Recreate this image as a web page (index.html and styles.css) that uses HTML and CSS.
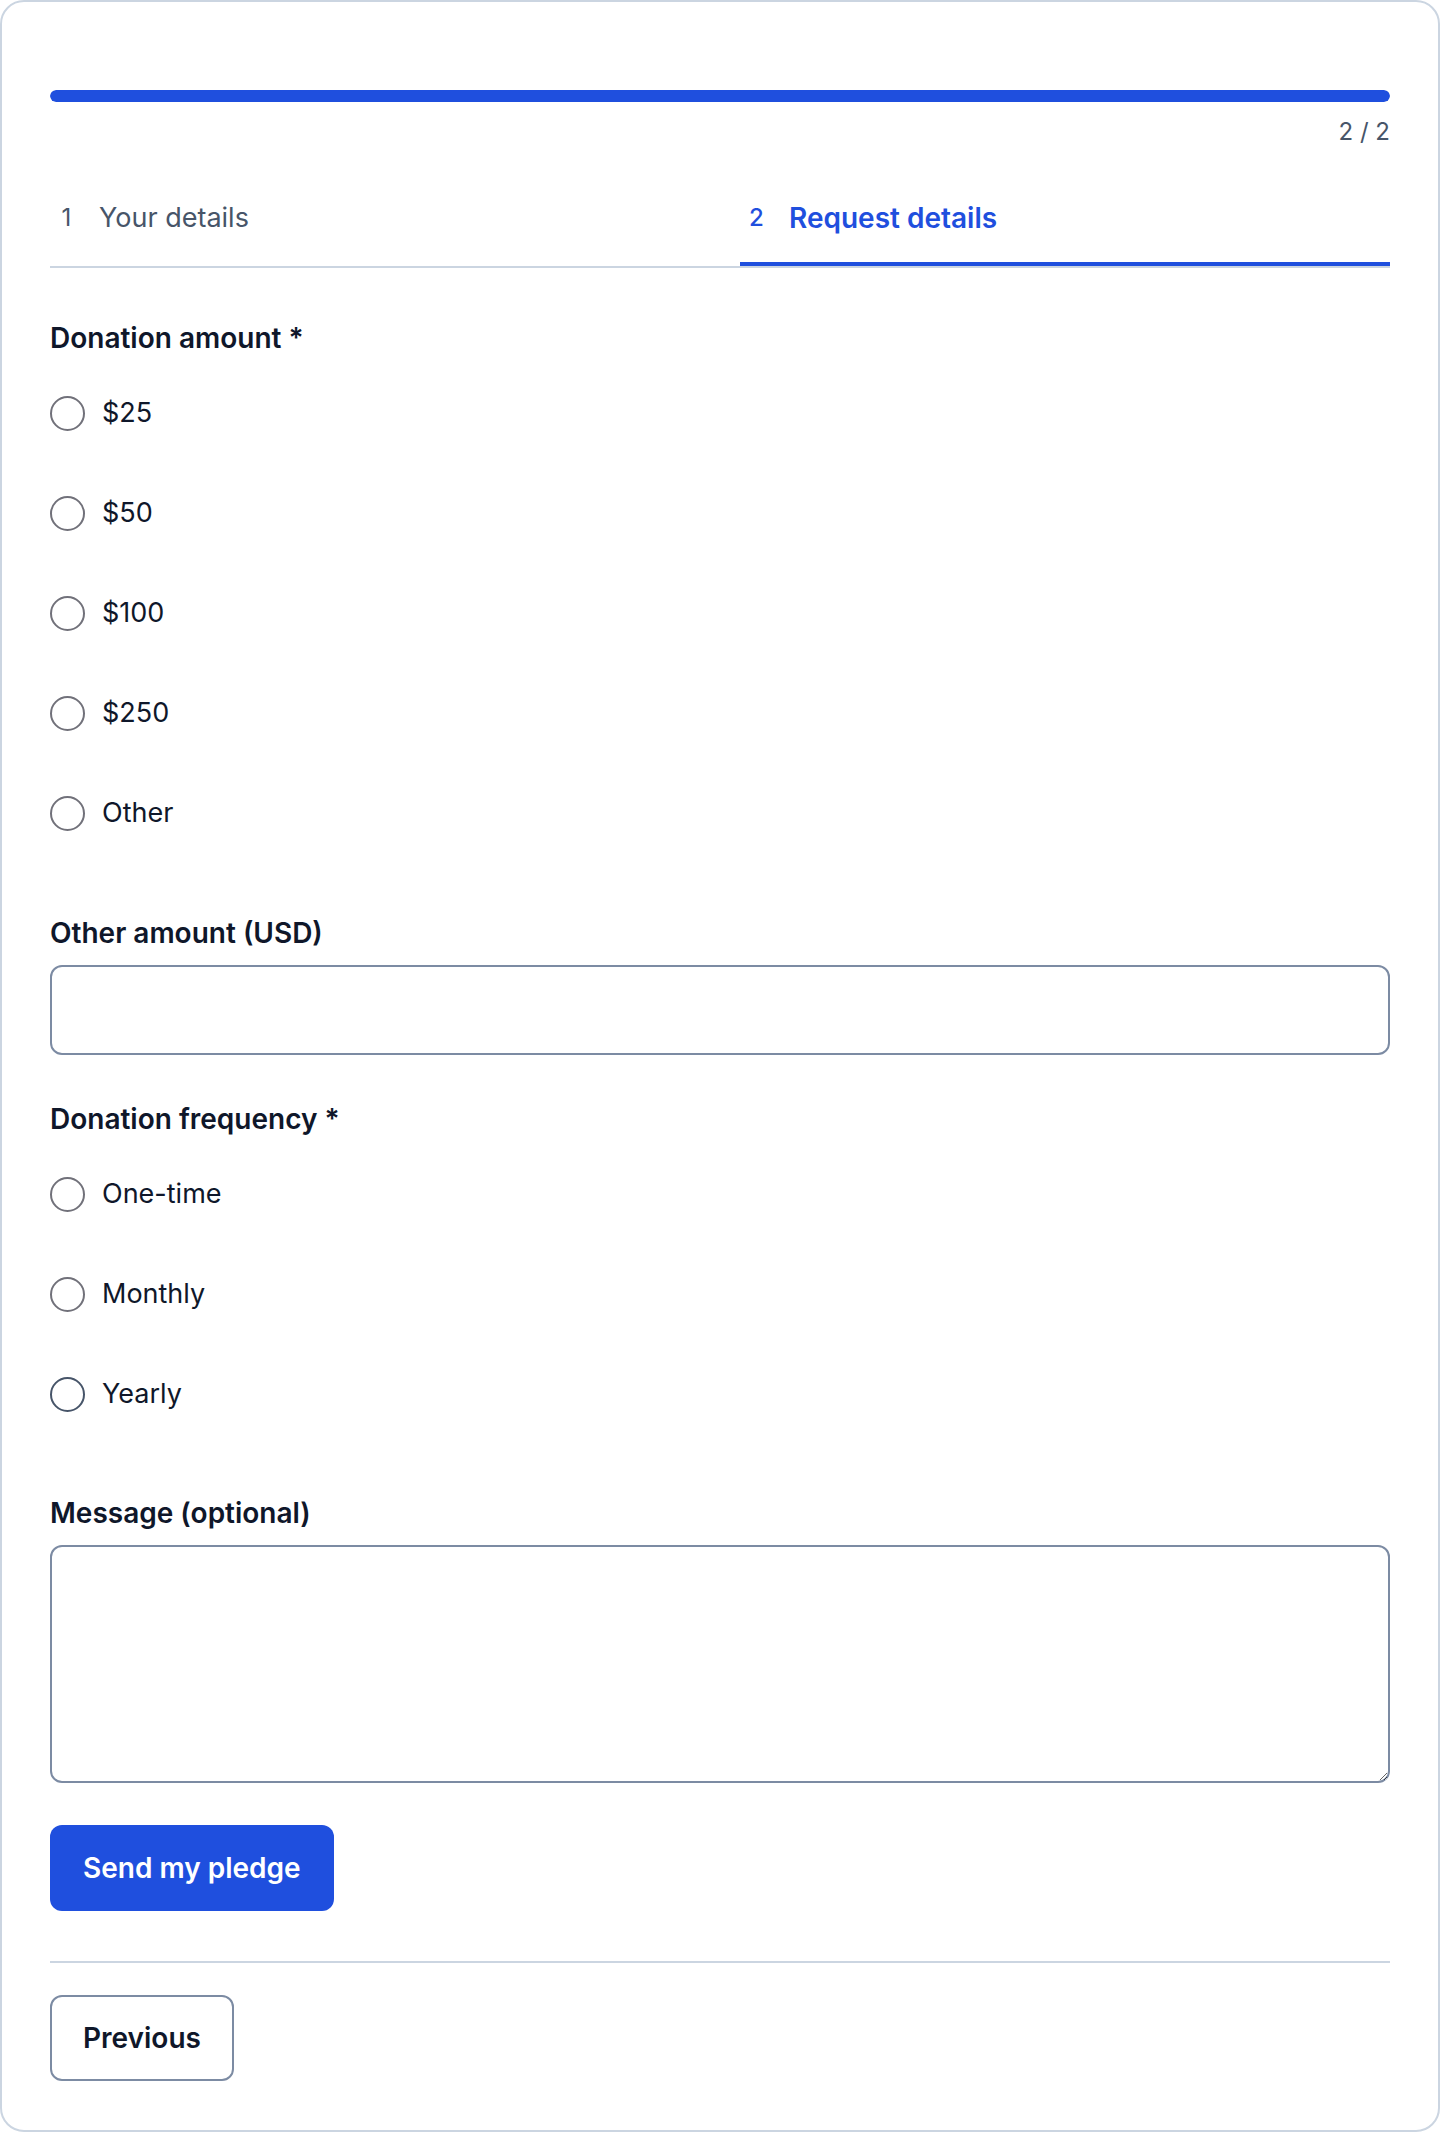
FILE: index.html
```html
<!DOCTYPE html>
<html lang="en">
<head>
<meta charset="utf-8">
<title>Pledge form</title>
<link rel="stylesheet" href="styles.css">
</head>
<body>
<div class="card">
  <div class="progress"><div class="progress-fill" style="width:100%"></div></div>
  <div class="counter">2 / 2</div>
  <div class="tabs">
    <div class="tab"><span class="tab-num">1</span><span class="tab-label">Your details</span></div>
    <div class="tab active"><span class="tab-num">2</span><span class="tab-label">Request details</span></div>
  </div>
  <form class="form">
    <div class="field field-first">
      <div class="label">Donation amount *</div>
      <label class="option"><input class="radio" type="radio" name="amount"><span>$25</span></label>
      <label class="option"><input class="radio" type="radio" name="amount"><span>$50</span></label>
      <label class="option"><input class="radio" type="radio" name="amount"><span>$100</span></label>
      <label class="option"><input class="radio" type="radio" name="amount"><span>$250</span></label>
      <label class="option"><input class="radio" type="radio" name="amount"><span>Other</span></label>
    </div>
    <div class="field field-other">
      <label class="label" for="other">Other amount (USD)</label>
      <input class="text-input" id="other" type="text">
    </div>
    <div class="field field-freq">
      <div class="label">Donation frequency *</div>
      <label class="option"><input class="radio" type="radio" name="freq"><span>One-time</span></label>
      <label class="option"><input class="radio" type="radio" name="freq"><span>Monthly</span></label>
      <label class="option"><input class="radio radio-dark" type="radio" name="freq"><span>Yearly</span></label>
    </div>
    <div class="field field-msg">
      <label class="label" for="msg">Message (optional)</label>
      <textarea class="textarea" id="msg"></textarea>
    </div>
    <div class="submit-row">
      <button class="btn btn-primary" type="button">Send my pledge</button>
    </div>
    <div class="divider"></div>
    <div class="nav-row">
      <button class="btn btn-secondary" type="button">Previous</button>
    </div>
  </form>
</div>
</body>
</html>
```
FILE: styles.css
```css
* { box-sizing: border-box; }
html, body { margin: 0; padding: 0; background: #ffffff; }
body {
  font-family: Inter, "Noto Sans", "Liberation Sans", sans-serif;
  color: #0f172a;
}
.card {
  width: 1440px;
  height: 2132px;
  border: 2px solid #cbd5e1;
  border-radius: 24px;
  padding: 88px 48px 49px;
  background: #fff;
}
.progress {
  height: 12px;
  border-radius: 6px;
  background: #e2e8f0;
  overflow: hidden;
}
.progress-fill {
  height: 100%;
  background: #1f4fde;
  border-radius: 6px;
}
.counter {
  margin-top: 16px;
  text-align: right;
  font-size: 24px;
  line-height: 28px;
  color: #475569;
}
.tabs {
  margin-top: 24px;
  display: grid;
  grid-template-columns: 1fr 1fr;
  column-gap: 40px;
  border-bottom: 2px solid #cbd5e1;
}
.tab {
  height: 96px;
  display: flex;
  align-items: center;
  gap: 24px;
  padding: 4px 8px 0;
  border-bottom: 4px solid transparent;
  color: #475569;
}
.tab-num { width: 17px; text-align: center; font-size: 24px; line-height: 28px; }
.tab-label { font-size: 27px; line-height: 36px; }
.tab.active { border-bottom-color: #1f4fde; color: #1f4fde; }
.tab.active .tab-label { font-size: 28px; font-weight: 600; }
.tab.active .tab-num { font-weight: 500; }

.form { display: flex; flex-direction: column; }
.field { display: flex; flex-direction: column; gap: 14px; }
.field-first { margin-top: 52px; }
.field-other { margin-top: 59px; }
.field-freq { margin-top: 46px; }
.field-msg { margin-top: 58px; }
.label {
  font-size: 28px;
  line-height: 36px;
  font-weight: 600;
  color: #0f172a;
}
.option {
  display: flex;
  align-items: center;
  gap: 17px;
  padding: 25px 0;
  font-size: 27px;
  line-height: 36px;
  color: #0f172a;
}
.radio {
  appearance: none;
  -webkit-appearance: none;
  margin: 0;
  width: 35px;
  height: 35px;
  flex: none;
  border: 2px solid #71717a;
  border-radius: 50%;
  background: #fff;
}
.radio-dark { border-color: #475569; }
.text-input {
  height: 90px;
  width: 100%;
  border: 2px solid #7c8ba3;
  border-radius: 12px;
  background: #fff;
  font: inherit;
  font-size: 28px;
  padding: 0 20px;
}
.textarea {
  height: 238px;
  width: 100%;
  border: 2px solid #7c8ba3;
  border-radius: 12px;
  background: #fff;
  font: inherit;
  font-size: 28px;
  padding: 16px 20px;
  resize: vertical;
  display: block;
}
.submit-row { margin-top: 42px; display: flex; }
.btn {
  height: 86px;
  padding: 0 33px;
  border-radius: 12px;
  font-family: inherit;
  font-size: 28px;
  font-weight: 600;
  cursor: pointer;
}
.btn-primary { background: #1f4fde; color: #fff; border: none; }
.btn-secondary { background: #fff; color: #0f172a; border: 2px solid #7c8ba3; padding: 0 31px; }
.divider { margin-top: 50px; height: 2px; background: #cbd5e1; }
.nav-row { margin-top: 32px; display: flex; }
```
